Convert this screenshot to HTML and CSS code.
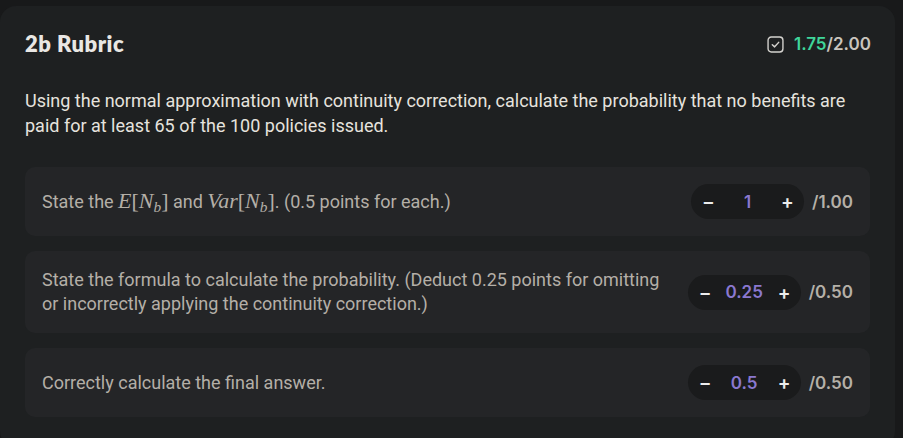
FILE: index.html
```html
<!DOCTYPE html>
<html>
<head>
<meta charset="utf-8">
<link rel="stylesheet" href="styles.css">
</head>
<body>
<div class="card">
  <div class="header">
    <h2 class="title">2b Rubric</h2>
    <div class="score">
      <svg class="check" width="17" height="17" viewBox="0 0 16 16">
        <rect x="1" y="1" width="14" height="14" rx="3" fill="none" stroke="#d4d2ce" stroke-width="1.3"/>
        <path d="M5 8.2 L7.2 10.2 L11 6" fill="none" stroke="#d4d2ce" stroke-width="1.4" stroke-linecap="round" stroke-linejoin="round"/>
      </svg>
      <span class="got">1.75</span><span class="of">/2.00</span>
    </div>
  </div>
  <p class="question">Using the normal approximation with continuity correction, calculate the probability that no benefits are paid for at least 65 of the 100 policies issued.</p>
  <div class="items">
    <div class="item">
      <div class="item-text">State the <span class="math"><i>E</i>[<i>N</i><sub><i>b</i></sub>]</span> and <span class="math"><i>V</i><i>a</i><i>r</i>[<i>N</i><sub><i>b</i></sub>]</span>. (0.5 points for each.)</div>
      <div class="controls">
        <div class="stepper"><span class="btn">−</span><span class="val">1</span><span class="btn">+</span></div>
        <span class="max">/1.00</span>
      </div>
    </div>
    <div class="item">
      <div class="item-text">State the formula to calculate the probability. (Deduct 0.25 points for omitting or incorrectly applying the continuity correction.)</div>
      <div class="controls">
        <div class="stepper"><span class="btn">−</span><span class="val">0.25</span><span class="btn">+</span></div>
        <span class="max">/0.50</span>
      </div>
    </div>
    <div class="item">
      <div class="item-text">Correctly calculate the final answer.</div>
      <div class="controls">
        <div class="stepper"><span class="btn">−</span><span class="val">0.5</span><span class="btn">+</span></div>
        <span class="max">/0.50</span>
      </div>
    </div>
  </div>
</div>
</body>
</html>
```
FILE: styles.css
```css
html, body {
  margin: 0;
  padding: 0;
  background: #18191a;
}
body {
  font-family: Roboto, "Liberation Sans", sans-serif;
  height: 438px;
  overflow: hidden;
}
.card {
  margin: 6px 8px 0 0;
  background: #1e2021;
  border-radius: 16px;
  padding: 26px 25px 30px 25px;
  min-height: 420px;
  box-sizing: border-box;
}
.header {
  display: flex;
  align-items: center;
  justify-content: space-between;
  height: 24px;
}
.title {
  margin: 0;
  font-family: Lato, "Open Sans", sans-serif;
  font-weight: 800;
  font-size: 22px;
  letter-spacing: 0.5px;
  color: #e9e7e4;
  line-height: 24px;
}
.score {
  display: flex;
  align-items: center;
  font-family: Inter, Roboto, sans-serif;
  font-weight: 600;
  font-size: 17px;
  margin-right: -1px;
}
.check {
  margin-right: 10px;
}
.got { color: #3fd69a; }
.of { color: #c9c5be; }
.question {
  margin: 32px 0 29px 0;
  color: #e6e3de;
  font-size: 18px;
  line-height: 25px;
}
.items {
  display: flex;
  flex-direction: column;
  gap: 15px;
}
.item {
  background: #242527;
  border-radius: 10px;
  padding: 17px 17px 17px 17px;
  display: flex;
  align-items: center;
  justify-content: space-between;
  min-height: 35px;
}
.item-text {
  color: #b4afa7;
  font-size: 18px;
  line-height: 24px;
  max-width: 628px;
}
.math {
  font-family: "Liberation Serif", "DejaVu Serif", serif;
  font-size: 1.22em;
  line-height: 1;
}
.math i { font-style: italic; }
.math sub {
  font-size: 0.7em;
  vertical-align: -0.25em;
  line-height: 0;
}
.controls {
  display: flex;
  align-items: center;
  gap: 8px;
  flex-shrink: 0;
}
.stepper {
  background: #1a1b1c;
  border-radius: 18px;
  height: 35px;
  width: 113px;
  display: flex;
  align-items: center;
  justify-content: space-between;
  padding: 0 11px;
  box-sizing: border-box;
  font-family: Inter, Roboto, sans-serif;
  font-weight: 600;
  font-size: 17px;
}
.btn {
  color: #ececec;
  font-size: 19px;
  width: 12px;
  text-align: center;
}
.val {
  color: #8a78cf;
}
.max {
  color: #b5b0a8;
  font-family: Inter, Roboto, sans-serif;
  font-weight: 600;
  font-size: 17px;
}
```
